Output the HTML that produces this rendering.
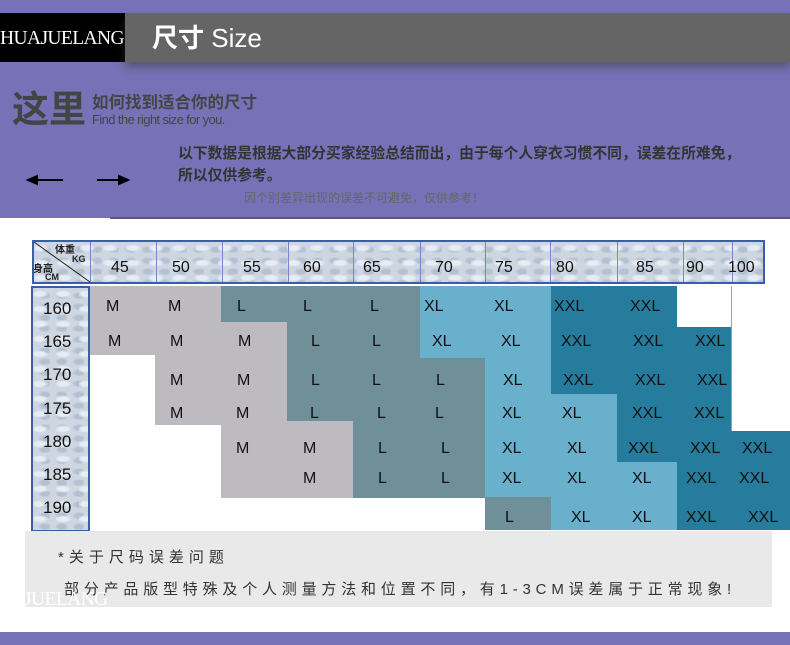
<!DOCTYPE html>
<html><head><meta charset="utf-8"><style>
*{margin:0;padding:0;box-sizing:border-box}
body{width:790px;height:645px;position:relative;background:#fff;overflow:hidden;font-family:"Liberation Sans","Noto Sans CJK SC",sans-serif}
.a{position:absolute}
.c{position:absolute;font-size:16px;color:#111;line-height:20px}
.tex{background-color:#cdd6e1;background-image:radial-gradient(ellipse 9px 4px at 30% 40%,#e8edf3 50%,transparent 100%),radial-gradient(ellipse 7px 4px at 70% 70%,#b3c0d0 50%,transparent 100%);background-size:23px 15px,17px 11px;}
</style></head><body>
<div class="a" style="left:0;top:0;width:790px;height:218px;background:#7772b8"></div>
<div class="a" style="left:110px;top:217px;width:680px;height:2px;background:#5a5690"></div>
<div class="a" style="left:0;top:13px;width:125px;height:49px;background:#000;color:#fff;font-family:'Liberation Serif',serif;font-size:19.5px;line-height:52px;letter-spacing:-0.6px;white-space:nowrap;overflow:hidden">HUAJUELANG</div>
<div class="a" style="left:125px;top:13px;width:665px;height:49px;background:#656565;box-shadow:0 6px 8px rgba(60,60,60,.5)"></div>
<div class="a" style="left:152px;top:22px;color:#fff;font-size:26px;line-height:32px;font-weight:bold">尺寸 <span style="font-weight:normal">Size</span></div>
<div class="a" style="left:12px;top:88px;color:#444;font-size:37px;font-weight:bold;line-height:44px">这里</div>
<div class="a" style="left:92px;top:94px;color:#444;font-size:16.5px;font-weight:bold;line-height:18px">如何找到适合你的尺寸</div>
<div class="a" style="left:92px;top:113px;color:#444;font-size:13px;line-height:14px;letter-spacing:-0.6px">Find the right size for you.</div>
<div class="a" style="left:178px;top:143px;color:#333;font-size:14.8px;font-weight:bold;line-height:22px;width:620px;white-space:nowrap">以下数据是根据大部分买家经验总结而出，由于每个人穿衣习惯不同，误差在所难免，<br>所以仅供参考。</div>
<div class="a" style="left:244px;top:191px;color:#666;font-size:12px;line-height:14px">因个别差异出现的误差不可避免，仅供参考！</div>
<svg class="a" style="left:25px;top:172px" width="110" height="16"><path d="M3 8H38M3 8l9-4v8z M72 8H103M103 8l-9-4v8z" stroke="#000" stroke-width="2" fill="#000"/></svg>

<div class="a tex" style="left:32px;top:240px;width:733px;height:44px;border:2px solid #3a5fa8"></div>
<svg class="a" style="left:32px;top:240px" width="60" height="44"><line x1="2" y1="2" x2="58" y2="42" stroke="#222" stroke-width="1"/></svg>
<div class="a" style="left:55px;top:241px;font-size:10px;font-weight:bold;color:#222">体重</div>
<div class="a" style="left:72px;top:254px;font-size:9px;font-weight:bold;color:#222">KG</div>
<div class="a" style="left:33px;top:260px;font-size:10px;font-weight:bold;color:#222">身高</div>
<div class="a" style="left:45px;top:272px;font-size:9px;font-weight:bold;color:#222">CM</div>
<div class="a" style="left:90px;top:242px;width:1px;height:40px;background:#7a86c8"></div>
<div class="a" style="left:156px;top:242px;width:1px;height:40px;background:#7a86c8"></div>
<div class="a" style="left:222px;top:242px;width:1px;height:40px;background:#7a86c8"></div>
<div class="a" style="left:288px;top:242px;width:1px;height:40px;background:#7a86c8"></div>
<div class="a" style="left:353px;top:242px;width:1px;height:40px;background:#7a86c8"></div>
<div class="a" style="left:420px;top:242px;width:1px;height:40px;background:#7a86c8"></div>
<div class="a" style="left:485px;top:242px;width:1px;height:40px;background:#7a86c8"></div>
<div class="a" style="left:550px;top:242px;width:1px;height:40px;background:#7a86c8"></div>
<div class="a" style="left:617px;top:242px;width:1px;height:40px;background:#7a86c8"></div>
<div class="a" style="left:683px;top:242px;width:1px;height:40px;background:#7a86c8"></div>
<div class="a" style="left:732px;top:242px;width:1px;height:40px;background:#7a86c8"></div>
<div class="c" style="left:111px;top:258px">45</div>
<div class="c" style="left:172px;top:258px">50</div>
<div class="c" style="left:243px;top:258px">55</div>
<div class="c" style="left:303px;top:258px">60</div>
<div class="c" style="left:363px;top:258px">65</div>
<div class="c" style="left:435px;top:258px">70</div>
<div class="c" style="left:495px;top:258px">75</div>
<div class="c" style="left:556px;top:258px">80</div>
<div class="c" style="left:636px;top:258px">85</div>
<div class="c" style="left:686px;top:258px">90</div>
<div class="c" style="left:728px;top:258px">100</div>

<div class="a tex" style="left:31px;top:286px;width:59px;height:246px;border:2px solid #3a5fa8"></div>
<div class="c" style="left:43px;top:299px;font-size:17px">160</div>
<div class="c" style="left:43px;top:332px;font-size:17px">165</div>
<div class="c" style="left:43px;top:365px;font-size:17px">170</div>
<div class="c" style="left:43px;top:399px;font-size:17px">175</div>
<div class="c" style="left:43px;top:432px;font-size:17px">180</div>
<div class="c" style="left:43px;top:465px;font-size:17px">185</div>
<div class="c" style="left:43px;top:498px;font-size:17px">190</div>

<div class="a" style="left:90px;top:286px;width:65px;height:69px;background:#bdbbbf"></div>
<div class="a" style="left:155px;top:286px;width:66px;height:139px;background:#bdbbbf"></div>
<div class="a" style="left:221px;top:322px;width:66px;height:176px;background:#bdbbbf"></div>
<div class="a" style="left:287px;top:421px;width:66px;height:77px;background:#bdbbbf"></div>
<div class="a" style="left:221px;top:286px;width:66px;height:36px;background:#6f9099"></div>
<div class="a" style="left:287px;top:286px;width:66px;height:135px;background:#6f9099"></div>
<div class="a" style="left:353px;top:286px;width:67px;height:212px;background:#6f9099"></div>
<div class="a" style="left:420px;top:358px;width:65px;height:140px;background:#6f9099"></div>
<div class="a" style="left:485px;top:497px;width:66px;height:33px;background:#6f9099"></div>
<div class="a" style="left:420px;top:286px;width:65px;height:72px;background:#68b0cc"></div>
<div class="a" style="left:485px;top:286px;width:66px;height:211px;background:#68b0cc"></div>
<div class="a" style="left:551px;top:394px;width:66px;height:136px;background:#68b0cc"></div>
<div class="a" style="left:617px;top:462px;width:60px;height:68px;background:#68b0cc"></div>
<div class="a" style="left:551px;top:286px;width:66px;height:108px;background:#267c9c"></div>
<div class="a" style="left:617px;top:286px;width:60px;height:176px;background:#267c9c"></div>
<div class="a" style="left:677px;top:327px;width:54px;height:203px;background:#267c9c"></div>
<div class="a" style="left:731px;top:431px;width:59px;height:99px;background:#267c9c"></div>
<div class="a" style="left:731px;top:286px;width:1px;height:145px;background:#9a9ad0"></div>

<div class="c" style="left:106px;top:297px">M</div><div class="c" style="left:168px;top:297px">M</div><div class="c" style="left:237px;top:297px">L</div><div class="c" style="left:303px;top:297px">L</div><div class="c" style="left:370px;top:297px">L</div><div class="c" style="left:424px;top:297px">XL</div><div class="c" style="left:494px;top:297px">XL</div><div class="c" style="left:554px;top:297px">XXL</div><div class="c" style="left:630px;top:297px">XXL</div>
<div class="c" style="left:108px;top:332px">M</div><div class="c" style="left:170px;top:332px">M</div><div class="c" style="left:238px;top:332px">M</div><div class="c" style="left:311px;top:332px">L</div><div class="c" style="left:372px;top:332px">L</div><div class="c" style="left:432px;top:332px">XL</div><div class="c" style="left:501px;top:332px">XL</div><div class="c" style="left:561px;top:332px">XXL</div><div class="c" style="left:633px;top:332px">XXL</div><div class="c" style="left:695px;top:332px">XXL</div>
<div class="c" style="left:170px;top:371px">M</div><div class="c" style="left:237px;top:371px">M</div><div class="c" style="left:311px;top:371px">L</div><div class="c" style="left:372px;top:371px">L</div><div class="c" style="left:436px;top:371px">L</div><div class="c" style="left:503px;top:371px">XL</div><div class="c" style="left:563px;top:371px">XXL</div><div class="c" style="left:635px;top:371px">XXL</div><div class="c" style="left:697px;top:371px">XXL</div>
<div class="c" style="left:170px;top:404px">M</div><div class="c" style="left:236px;top:404px">M</div><div class="c" style="left:310px;top:404px">L</div><div class="c" style="left:377px;top:404px">L</div><div class="c" style="left:435px;top:404px">L</div><div class="c" style="left:502px;top:404px">XL</div><div class="c" style="left:562px;top:404px">XL</div><div class="c" style="left:632px;top:404px">XXL</div><div class="c" style="left:694px;top:404px">XXL</div>
<div class="c" style="left:236px;top:439px">M</div><div class="c" style="left:303px;top:439px">M</div><div class="c" style="left:378px;top:439px">L</div><div class="c" style="left:441px;top:439px">L</div><div class="c" style="left:502px;top:439px">XL</div><div class="c" style="left:567px;top:439px">XL</div><div class="c" style="left:628px;top:439px">XXL</div><div class="c" style="left:690px;top:439px">XXL</div><div class="c" style="left:742px;top:439px">XXL</div>
<div class="c" style="left:303px;top:469px">M</div><div class="c" style="left:378px;top:469px">L</div><div class="c" style="left:441px;top:469px">L</div><div class="c" style="left:502px;top:469px">XL</div><div class="c" style="left:567px;top:469px">XL</div><div class="c" style="left:632px;top:469px">XL</div><div class="c" style="left:686px;top:469px">XXL</div><div class="c" style="left:739px;top:469px">XXL</div>
<div class="c" style="left:505px;top:508px">L</div><div class="c" style="left:571px;top:508px">XL</div><div class="c" style="left:632px;top:508px">XL</div><div class="c" style="left:686px;top:508px">XXL</div><div class="c" style="left:748px;top:508px">XXL</div>

<div class="a" style="left:25px;top:531px;width:747px;height:76px;background:#e9e9e9"></div>
<div class="a" style="left:58px;top:546px;font-size:15px;color:#333;letter-spacing:5px;white-space:nowrap">*关于尺码误差问题</div>
<div class="a" style="left:64px;top:578px;font-size:15px;color:#333;letter-spacing:4.8px;white-space:nowrap">部分产品版型特殊及个人测量方法和位置不同，有1-3CM误差属于正常现象!</div>
<div class="a" style="left:24px;top:589px;font-family:'Liberation Serif',serif;font-size:19.5px;color:#fff;letter-spacing:-0.6px">JUELANG</div>
<div class="a" style="left:0;top:632px;width:790px;height:13px;background:#7772b8"></div>
</body></html>
